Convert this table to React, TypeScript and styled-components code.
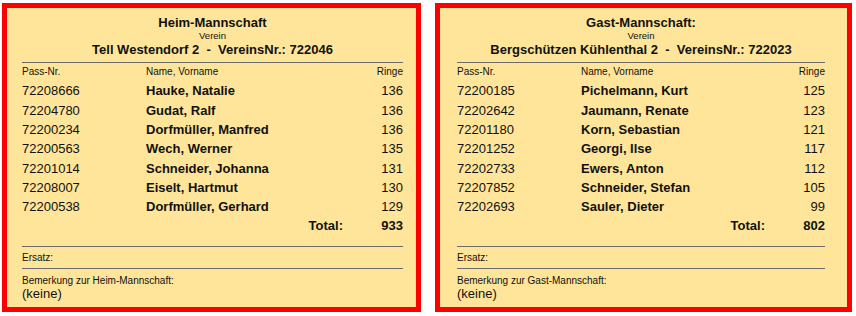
import styled, {createGlobalStyle} from "styled-components";

interface IShooter {
    pass: string
    name: string
    rings: number
}

interface ITeam {
    title: string
    club: string
    clubNr: string
    label: string
    panelWidth: number
    inset: number
    width: number
    shooters: IShooter[]
}

const teams: ITeam[] = [
    {
        title: 'Heim-Mannschaft',
        club: 'Tell Westendorf 2',
        clubNr: '722046',
        label: 'Heim-Mannschaft',
        panelWidth: 419,
        inset: 15,
        width: 381,
        shooters: [
            {pass: '72208666', name: 'Hauke, Natalie', rings: 136},
            {pass: '72204780', name: 'Gudat, Ralf', rings: 136},
            {pass: '72200234', name: 'Dorfmüller, Manfred', rings: 136},
            {pass: '72200563', name: 'Wech, Werner', rings: 135},
            {pass: '72201014', name: 'Schneider, Johanna', rings: 131},
            {pass: '72208007', name: 'Eiselt, Hartmut', rings: 130},
            {pass: '72200538', name: 'Dorfmüller, Gerhard', rings: 129},
        ],
    },
    {
        title: 'Gast-Mannschaft:',
        club: 'Bergschützen Kühlenthal 2',
        clubNr: '722023',
        label: 'Gast-Mannschaft',
        panelWidth: 417,
        inset: 17,
        width: 368,
        shooters: [
            {pass: '72200185', name: 'Pichelmann, Kurt', rings: 125},
            {pass: '72202642', name: 'Jaumann, Renate', rings: 123},
            {pass: '72201180', name: 'Korn, Sebastian', rings: 121},
            {pass: '72201252', name: 'Georgi, Ilse', rings: 117},
            {pass: '72202733', name: 'Ewers, Anton', rings: 112},
            {pass: '72207852', name: 'Schneider, Stefan', rings: 105},
            {pass: '72202693', name: 'Sauler, Dieter', rings: 99},
        ],
    },
]

const TeamPanel = ({team}: { team: ITeam }) => {
    const total = team.shooters.reduce((sum, s) => sum + s.rings, 0)
    return (
        <Panel $width={team.panelWidth} $inset={team.inset}>
            <Content $width={team.width}>
                <Title>{team.title}</Title>
                <SubTitle>Verein</SubTitle>
                <Club>{`${team.club}  -  VereinsNr.: ${team.clubNr}`}</Club>
                <Rule $gap={5.5}/>
                <Table>
                    <HeadCell>Pass-Nr.</HeadCell>
                    <HeadCell>Name, Vorname</HeadCell>
                    <HeadCell $right>Ringe</HeadCell>
                    {team.shooters.map(s => (
                        <Row key={s.pass}>
                            <Cell>{s.pass}</Cell>
                            <Cell $bold>{s.name}</Cell>
                            <Cell $right>{s.rings}</Cell>
                        </Row>
                    ))}
                    <Row>
                        <Cell/>
                        <Cell $bold $right>Total:</Cell>
                        <Cell $bold $right>{total}</Cell>
                    </Row>
                </Table>
                <Rule $gap={10}/>
                <Small $gap={5.3}>Ersatz:</Small>
                <Rule $gap={4}/>
                <Small $gap={5.7}>Bemerkung zur {team.label}:</Small>
                <Remark>(keine)</Remark>
            </Content>
        </Panel>
    )
}

export default function App() {
    return (
        <>
            <GlobalStyle/>
            <Page>
                {teams.map(team => <TeamPanel key={team.label} team={team}/>)}
            </Page>
        </>
    )
}

const GlobalStyle = createGlobalStyle`
  body {
    margin: 0;
    background: #fff;
    font-family: "Liberation Sans", Arial, sans-serif;
    color: #111;
  }
`

const Page = styled.div`
  display: flex;
  gap: 14px;
  padding: 3px 0 0 2px;
`

const Panel = styled.div<{ $width: number, $inset: number }>`
  box-sizing: border-box;
  width: ${p => p.$width}px;
  height: 309px;
  border: 5px solid #ff0000;
  background: #ffe599;
  padding: 6.5px 0 0 ${p => p.$inset}px;
`

const Content = styled.div<{ $width: number }>`
  width: ${p => p.$width}px;
  display: flex;
  flex-direction: column;
`

const Title = styled.div`
  text-align: center;
  font-size: 13px;
  font-weight: bold;
  line-height: 15px;
`

const SubTitle = styled.div`
  text-align: center;
  font-size: 9.5px;
  line-height: 12px;
`

const Club = styled.div`
  text-align: center;
  font-size: 13px;
  font-weight: bold;
  line-height: 15px;
  white-space: pre;
`

const Rule = styled.div<{ $gap: number }>`
  margin-top: ${p => p.$gap}px;
  height: 1px;
  background: #6b6b6b;
`

const Table = styled.div`
  margin-top: 3px;
  display: grid;
  grid-template-columns: 124px 1fr 60px;
`

const HeadCell = styled.div<{ $right?: boolean }>`
  font-size: 10px;
  line-height: 12px;
  padding-bottom: 3.35px;
  text-align: ${p => p.$right ? 'right' : 'left'};
`

const Row = styled.div`
  display: contents;
`

const Cell = styled.div<{ $bold?: boolean, $right?: boolean }>`
  font-size: 13px;
  line-height: 19.3px;
  font-weight: ${p => p.$bold ? 'bold' : 'normal'};
  text-align: ${p => p.$right ? 'right' : 'left'};
`

const Small = styled.div<{ $gap: number }>`
  margin-top: ${p => p.$gap}px;
  font-size: 10px;
  line-height: 12px;
`

const Remark = styled.div`
  font-size: 13px;
  line-height: 13px;
`
